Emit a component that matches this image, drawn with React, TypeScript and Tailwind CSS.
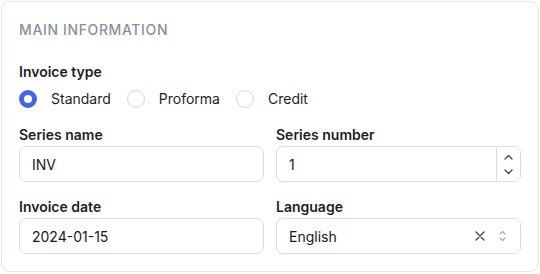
import { useState } from 'react';

const types = ['Standard', 'Proforma', 'Credit'];

const Label = ({ children }: { children: React.ReactNode }) => (
  <span className="text-[14px] leading-5 font-semibold text-[#1c1f24]">{children}</span>
);

const App = () => {
  const [invoiceType, setInvoiceType] = useState('Standard');

  return (
    <div className="w-[540px] h-[274px] bg-white p-px" style={{ fontFamily: 'Inter, "Noto Sans", sans-serif' }}>
      <section className="w-[538px] h-[271px] rounded-[9px] border border-[#e4e6e9] px-[17px] pt-[18px]">
        {/* Heading */}
        <h2 className="text-[14px] leading-5 font-medium tracking-[0.045em] text-[#8a9099] uppercase">
          Main information
        </h2>

        {/* Invoice type */}
        <div className="mt-[22px] flex flex-col gap-2">
          <Label>Invoice type</Label>
          <div className="flex items-center gap-4 h-[18px]">
            {types.map((t) => {
              const active = invoiceType === t;
              return (
                <button
                  key={t}
                  onClick={() => setInvoiceType(t)}
                  className="flex items-center gap-[14px] text-[14px] leading-5 text-[#1c1f24]"
                >
                  <span
                    className={
                      active
                        ? 'w-[18px] h-[18px] rounded-full border-[5px] border-[#4466e4] bg-white'
                        : 'w-[18px] h-[18px] rounded-full border border-[#d3d6db] bg-white'
                    }
                  />
                  {t}
                </button>
              );
            })}
          </div>
        </div>

        {/* Series */}
        <div className="mt-[17px] grid grid-cols-2 gap-x-3 gap-y-[15px]">
          <div className="flex flex-col gap-px">
            <Label>Series name</Label>
            <div className="h-9 rounded-[7px] border border-[#d9dce0] px-3 flex items-center text-[14px] text-[#16191d]">
              INV
            </div>
          </div>
          <div className="flex flex-col gap-px">
            <Label>Series number</Label>
            <div className="h-9 rounded-[7px] border border-[#d9dce0] flex items-center text-[14px] text-[#16191d]">
              <span className="flex-1 px-3">1</span>
              <div className="w-6 h-full border-l border-[#d9dce0] flex flex-col items-center justify-center gap-[9px] text-[#3d434b]">
                <svg width="9" height="6" viewBox="0 0 9 6" fill="none">
                  <path d="M1 5l3.5-3.5L8 5" stroke="currentColor" strokeWidth="1.3" strokeLinecap="round" strokeLinejoin="round" />
                </svg>
                <svg width="9" height="6" viewBox="0 0 9 6" fill="none">
                  <path d="M1 1l3.5 3.5L8 1" stroke="currentColor" strokeWidth="1.3" strokeLinecap="round" strokeLinejoin="round" />
                </svg>
              </div>
            </div>
          </div>

          <div className="flex flex-col gap-px">
            <Label>Invoice date</Label>
            <div className="h-9 rounded-[7px] border border-[#d9dce0] px-3 flex items-center text-[14px] text-[#16191d]">
              2024-01-15
            </div>
          </div>
          <div className="flex flex-col gap-px">
            <Label>Language</Label>
            <div className="h-9 rounded-[7px] border border-[#d9dce0] pl-3 pr-[14px] flex items-center text-[14px] text-[#16191d]">
              <span className="flex-1">English</span>
              <svg width="10" height="10" viewBox="0 0 10 10" fill="none" className="text-[#3a3f46]">
                <path d="M1 1l8 8M9 1l-8 8" stroke="currentColor" strokeWidth="1.3" strokeLinecap="round" />
              </svg>
              <svg width="7" height="12" viewBox="0 0 7 12" fill="none" className="ml-[14px] text-[#a3a8b0]">
                <path d="M1 4l2.5-2.5L6 4M1 8l2.5 2.5L6 8" stroke="currentColor" strokeWidth="1.1" strokeLinecap="round" strokeLinejoin="round" />
              </svg>
            </div>
          </div>
        </div>
      </section>
    </div>
  );
};

export default App;
